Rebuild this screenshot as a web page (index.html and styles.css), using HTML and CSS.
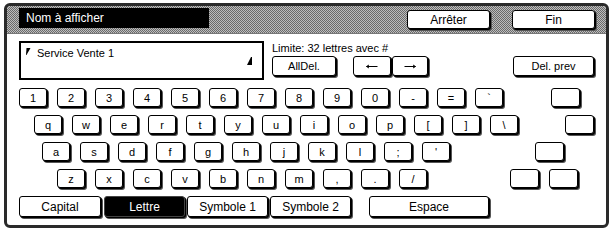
FILE: index.html
```html
<!DOCTYPE html>
<html lang="fr">
<head>
<meta charset="utf-8">
<title>Nom à afficher</title>
<link rel="stylesheet" href="styles.css">
</head>
<body>
<div class="frame">
  <div class="header">
    <div class="title">Nom à afficher</div>
    <div class="hbtn stop">Arrêter</div>
    <div class="hbtn fin">Fin</div>
  </div>
  <div class="body">
    <div class="top">
      <div class="input">
        <svg class="mark-tl" width="5" height="7" viewBox="0 0 5 7"><polygon points="0.5,0 4.5,0 0.5,7 0,7" fill="#000"/></svg>
        <span class="value">Service Vente 1</span>
        <svg class="mark-br" width="5" height="8" viewBox="0 0 5 8"><polygon points="4,0 5,0 5,8 0,8" fill="#000"/></svg>
      </div>
      <div class="ctrl">
        <div class="limit">Limite: 32 lettres avec #</div>
        <div class="ctrl-row">
          <div class="btn alldel">AllDel.</div>
          <div class="btn arrow left"><svg width="12" height="5" viewBox="0 0 12 5"><path d="M0.5 2.5H11.5M0.5 2.5L3 1M0.5 2.5L3 4" stroke="#000" stroke-width="1" fill="none"/></svg></div>
          <div class="btn arrow right"><svg width="12" height="5" viewBox="0 0 12 5"><path d="M0.5 2.5H11.5M11.5 2.5L9 1M11.5 2.5L9 4" stroke="#000" stroke-width="1" fill="none"/></svg></div>
          <div class="btn delprev">Del. prev</div>
        </div>
      </div>
    </div>
    <div class="keys">
      <div class="row r1">
        <div class="key">1</div><div class="key">2</div><div class="key">3</div><div class="key">4</div><div class="key">5</div><div class="key">6</div><div class="key">7</div><div class="key">8</div><div class="key">9</div><div class="key">0</div><div class="key">-</div><div class="key">=</div><div class="key">`</div>
        <div class="key blank b1"></div>
      </div>
      <div class="row r2">
        <div class="key">q</div><div class="key">w</div><div class="key">e</div><div class="key">r</div><div class="key">t</div><div class="key">y</div><div class="key">u</div><div class="key">i</div><div class="key">o</div><div class="key">p</div><div class="key">[</div><div class="key">]</div><div class="key">\</div>
        <div class="key blank b2"></div>
      </div>
      <div class="row r3">
        <div class="key">a</div><div class="key">s</div><div class="key">d</div><div class="key">f</div><div class="key">g</div><div class="key">h</div><div class="key">j</div><div class="key">k</div><div class="key">l</div><div class="key">;</div><div class="key">'</div>
        <div class="key blank b3"></div>
      </div>
      <div class="row r4">
        <div class="key">z</div><div class="key">x</div><div class="key">c</div><div class="key">v</div><div class="key">b</div><div class="key">n</div><div class="key">m</div><div class="key">,</div><div class="key">.</div><div class="key">/</div>
        <div class="key blank b4"></div><div class="key blank b5"></div>
      </div>
    </div>
    <div class="tabs">
      <div class="tab capital">Capital</div>
      <div class="tab lettre active">Lettre</div>
      <div class="tab sym1">Symbole 1</div>
      <div class="tab sym2">Symbole 2</div>
      <div class="tab espace">Espace</div>
    </div>
  </div>
</div>
</body>
</html>
```

FILE: styles.css
```css
html, body {
  margin: 0;
  padding: 0;
  background: #fff;
}
body {
  font-family: "Liberation Sans", Arial, sans-serif;
  color: #000;
  width: 612px;
  height: 231px;
  overflow: hidden;
}
.frame {
  box-sizing: border-box;
  margin: 3px 0 0 4px;
  width: 605px;
  height: 225px;
  border: 3px solid #2a2a2a;
  border-radius: 6px;
  background: #fff;
  overflow: hidden;
}
.header {
  box-sizing: border-box;
  height: 28px;
  display: flex;
  align-items: flex-start;
  padding-left: 12px;
  background: repeating-conic-gradient(#6a6a6a 0 25%, #bdbdbd 0 50%) 0 0 / 2px 2px;
  border-bottom: 1px solid #777;
  border-radius: 3px 3px 0 0;
}
.title {
  box-sizing: border-box;
  margin-top: 2px;
  width: 190px;
  height: 20px;
  background: #000;
  color: #fff;
  font-size: 12px;
  line-height: 20px;
  padding-left: 7px;
}
.hbtn, .btn, .key, .tab {
  box-sizing: border-box;
  background: #fff;
  border: 1px solid #000;
  border-radius: 3px;
  box-shadow: 1px 1px 0 #000, 2px 2px 0 #555;
  display: flex;
  align-items: center;
  justify-content: center;
  font-size: 11px;
}
.hbtn {
  margin-top: 4px;
  width: 83px;
  height: 19px;
  font-size: 12px;
}
.stop { margin-left: 198px; }
.fin { margin-left: 22px; }

.body {
  padding: 7px 0 0 12px;
}
.top {
  display: flex;
}
.input {
  box-sizing: border-box;
  width: 245px;
  height: 39px;
  border: 2px solid #000;
  display: flex;
  align-items: flex-start;
  padding: 4px 10px 0 5px;
}
.mark-tl { flex: none; margin-top: 1px; }
.value {
  font-size: 11px;
  line-height: 13px;
  margin-left: 6px;
}
.mark-br { flex: none; margin-left: auto; margin-top: 10px; }
.ctrl {
  margin-left: 8px;
}
.limit {
  font-size: 11px;
  line-height: 13px;
  margin-top: 1px;
}
.ctrl-row {
  display: flex;
  margin-top: 1px;
}
.btn { height: 20px; }
.alldel { width: 64px; }
.arrow.left { width: 38px; margin-left: 17px; }
.arrow.right { width: 36px; margin-left: 1px; }
.arrow svg { display: block; }
.delprev { width: 81px; margin-left: 85px; }

.keys {
  margin-top: 8px;
}
.row {
  display: flex;
  gap: 10px;
  height: 19px;
  margin-bottom: 8px;
}
.key {
  width: 28px;
  height: 19px;
  flex: none;
}
.r2 { margin-left: 15px; }
.r3 { margin-left: 23px; }
.r4 { margin-left: 38px; }
.blank { width: 29px; }
.b1 { margin-left: 38px; }
.b2 { margin-left: 37px; }
.b3 { margin-left: 75px; }
.b4 { margin-left: 73px; }

.tabs {
  display: flex;
  margin-top: 2px;
}
.tab {
  height: 21px;
  width: 81px;
  font-size: 12px;
}
.capital { width: 82px; }
.lettre { margin-left: 3px; }
.sym1 { margin-left: 2px; }
.sym2 { margin-left: 2px; }
.espace { margin-left: 18px; width: 120px; }
.tab.active {
  background: #000;
  color: #fff;
  border-color: #444;
}
```
